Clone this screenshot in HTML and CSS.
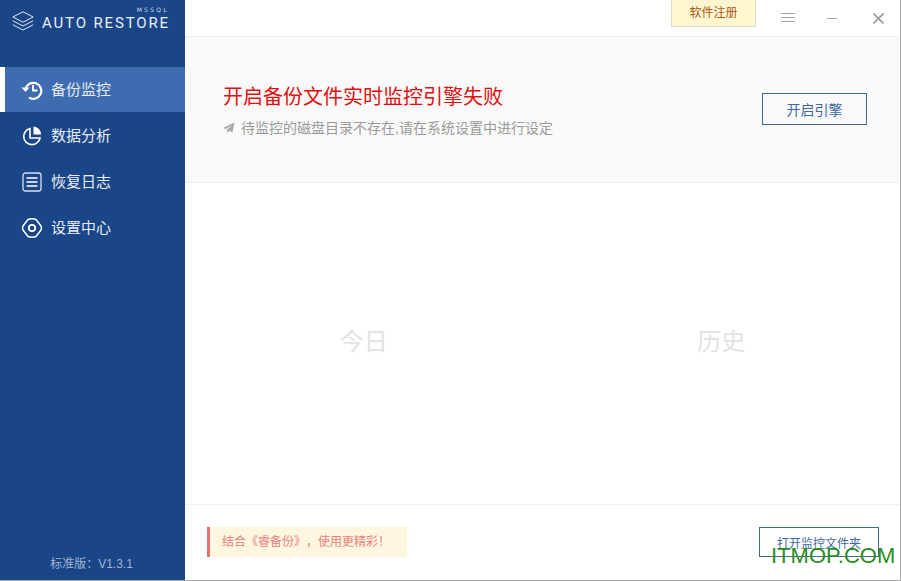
FILE: index.html
```html
<!DOCTYPE html>
<html lang="zh-CN">
<head>
    <meta charset="UTF-8">
    <title>Auto Restore</title>
    <link rel="stylesheet" href="styles.css">
</head>
<body>
    <div class="window">
        <aside class="sidebar">
            <div class="logo">
                <svg class="logo-icon" width="22" height="20" viewBox="0 0 22 20" fill="none" stroke="#dfe7f2" stroke-width="1">
                    <path d="M11 0.8 L21.2 6 L11 11.2 L0.8 6 Z"/>
                    <path d="M0.8 9.8 L11 15 L21.2 9.8"/>
                    <path d="M0.8 13.8 L11 19 L21.2 13.8"/>
                </svg>
                <div class="logo-text">
                    <div class="logo-sub">MSSQL</div>
                    <div class="logo-name">AUTO RESTORE</div>
                </div>
            </div>
            <nav class="nav">
                <div class="nav-item active">
                    <svg width="22" height="22" viewBox="0 0 22 22" fill="none" stroke="#fff" stroke-width="2.2">
                        <path d="M4.5 10 A8 8 0 1 1 8 18.6"/>
                        <path d="M0.5 8.5 L4.5 13 L8.5 8.5 Z" fill="#fff" stroke="none"/>
                        <path d="M12 6 V11.5 H16.5" stroke-width="1.8"/>
                    </svg>
                    <span>备份监控</span>
                </div>
                <div class="nav-item">
                    <svg width="22" height="22" viewBox="0 0 22 22" fill="none" stroke="#fff" stroke-width="1.6">
                        <path d="M9 3.5 A8.2 8.2 0 1 0 19 13 H9 Z"/>
                        <path d="M12.5 1.5 A8 8 0 0 1 20 9.5 H12.5 Z" fill="#fff" stroke="none"/>
                    </svg>
                    <span>数据分析</span>
                </div>
                <div class="nav-item">
                    <svg width="22" height="22" viewBox="0 0 22 22" fill="none" stroke="#fff" stroke-width="1.3">
                        <rect x="2" y="2" width="18" height="18" rx="2.5" stroke="#d5e0f0"/>
                        <path d="M5.5 7 H16.5 M5.5 11 H16.5 M5.5 15 H16.5" stroke-width="1.6"/>
                    </svg>
                    <span>恢复日志</span>
                </div>
                <div class="nav-item">
                    <svg width="22" height="22" viewBox="0 0 22 22" fill="none" stroke="#fff" stroke-width="1.5">
                        <path d="M7 2.5 Q11 1.2 15 2.5 L20 9 Q21 11 20 13 L15 19.5 Q11 20.8 7 19.5 L2 13 Q1 11 2 9 Z" stroke-linejoin="round"/>
                        <circle cx="11" cy="11" r="3.2" stroke-width="1.8"/>
                    </svg>
                    <span>设置中心</span>
                </div>
            </nav>
            <div class="version">标准版：V1.3.1</div>
        </aside>

        <main class="main">
            <header class="titlebar">
                <div class="register">软件注册</div>
                <div class="win-btns">
                    <svg width="14" height="10" viewBox="0 0 14 10" stroke="#a3a3a3" stroke-width="1"><path d="M0 0.5 H14 M0 4.5 H14 M0 8.5 H14"/></svg>
                    <svg class="win-min" width="10" height="11" viewBox="0 0 10 11" stroke="#a3a3a3" stroke-width="1"><path d="M0 5.5 H10"/></svg>
                    <svg class="win-close" width="11" height="11" viewBox="0 0 11 11" stroke="#9a9a9a" stroke-width="1.6"><path d="M0.5 0.5 L10.5 10.5 M10.5 0.5 L0.5 10.5"/></svg>
                </div>
            </header>

            <section class="status">
                <div class="status-text">
                    <h1>开启备份文件实时监控引擎失败</h1>
                    <p>
                        <svg width="12" height="12" viewBox="0 0 12 12"><path d="M11.5 0.5 L9.5 10.5 L6.2 8.8 L4.4 11 L4 7.8 L9.5 2.8 L2.8 7 L0.3 5.8 Z" fill="#a8a8a8"/></svg>
                        待监控的磁盘目录不存在,请在系统设置中进行设定
                    </p>
                </div>
                <button class="btn btn-engine">开启引擎</button>
            </section>

            <section class="stats">
                <div class="stat">今日</div>
                <div class="stat">历史</div>
            </section>

            <footer class="footer">
                <div class="tip">结合《睿备份》，使用更精彩！</div>
                <button class="btn btn-folder">打开监控文件夹</button>
            </footer>
        </main>
    </div>
    <div class="watermark">ITMOP.COM</div>
</body>
</html>
```

FILE: styles.css
```css
html, body {
    margin: 0;
    height: 100%;
}

body {
    position: relative;
    width: 901px;
    height: 581px;
    overflow: hidden;
    background-color: #a9a9a9;
    font-family: "Liberation Sans", "Noto Sans CJK SC", sans-serif;
    text-spacing-trim: space-all;
}

.window {
    display: flex;
    width: 900px;
    height: 580px;
    background-color: #fff;
}

.sidebar {
    display: flex;
    flex-direction: column;
    width: 185px;
    flex-shrink: 0;
    background-color: #1a4688;
    color: #fff;
}

.logo {
    display: flex;
    align-items: flex-start;
    gap: 8px;
    height: 67px;
    box-sizing: border-box;
    padding: 6px 0 0 12px;
}

.logo-icon {
    margin-top: 5px;
}

.logo-text {
    width: 127px;
}

.logo-sub {
    font-family: "DejaVu Sans", sans-serif;
    font-size: 6px;
    line-height: 7px;
    letter-spacing: 2.3px;
    text-align: right;
    color: #d3deee;
}

.logo-name {
    margin-top: 2px;
    font-family: Roboto, sans-serif;
    font-size: 15px;
    line-height: 16px;
    letter-spacing: 1.85px;
    white-space: nowrap;
    color: #e8eef7;
}

.nav {
    flex: 1;
}

.nav-item {
    display: flex;
    align-items: center;
    gap: 8px;
    height: 46px;
    padding-left: 21px;
    font-size: 15px;
    color: #e6ecf6;
}

.nav-item span {
    padding-bottom: 3px;
}

.nav-item.active {
    height: 45px;
    margin-bottom: 1px;
    padding-left: 16px;
    border-left: 5px solid #fff;
    background-color: #3f6cb0;
}

.version {
    padding: 0 2px 9px 0;
    text-align: center;
    font-size: 12px;
    color: #a3b5d2;
}

.main {
    display: flex;
    flex-direction: column;
    flex: 1;
    min-width: 0;
}

.titlebar {
    display: flex;
    justify-content: flex-end;
    align-items: flex-start;
    height: 36px;
    border-bottom: 1px solid #efefef;
}

.register {
    width: 83px;
    height: 26px;
    border: 1px solid #dcdcc4;
    border-top: 0;
    background-color: #fff6d0;
    color: #a5591a;
    font-size: 12px;
    line-height: 26px;
    text-align: center;
}

.win-btns {
    display: flex;
    align-items: center;
    height: 36px;
    margin-left: 25px;
    padding-right: 16px;
}

.win-min {
    margin-left: 32px;
}

.win-close {
    margin-left: 36px;
}

.status {
    display: flex;
    justify-content: space-between;
    align-items: center;
    height: 146px;
    box-sizing: border-box;
    padding: 0 33px 0 38px;
    background-color: #f9f9f9;
    border-bottom: 1px solid #f0f0f0;
}

.status h1 {
    margin: 0;
    font-size: 20px;
    line-height: 28px;
    font-weight: normal;
    color: #e01010;
}

.status p {
    display: flex;
    align-items: center;
    gap: 6px;
    margin: 8px 0 0;
    font-size: 14px;
    line-height: 18px;
    color: #999;
}

.btn {
    box-sizing: border-box;
    border: 1px solid #3f6a9f;
    background: transparent;
    color: #3f6a9f;
    font-family: inherit;
    padding: 0;
}

.btn-engine {
    width: 105px;
    height: 32px;
    margin-top: -1px;
    font-size: 14px;
}

.stats {
    display: flex;
    flex: 1;
    align-items: center;
    padding-bottom: 8px;
}

.stat {
    flex: 1;
    text-align: center;
    font-size: 24px;
    color: #e2e2e2;
}

.footer {
    display: flex;
    justify-content: space-between;
    align-items: flex-start;
    height: 76px;
    box-sizing: border-box;
    border-top: 1px solid #efefef;
    padding: 22px 21px 0 22px;
}

.tip {
    width: 200px;
    height: 30px;
    box-sizing: border-box;
    border-left: 3px solid #e96f6f;
    padding-left: 12px;
    background-color: #fff6e0;
    color: #ea7f7f;
    font-size: 12px;
    line-height: 30px;
    white-space: nowrap;
}

.btn-folder {
    width: 120px;
    height: 30px;
    font-size: 12px;
}

.watermark {
    position: absolute;
    left: 771px;
    top: 542px;
    font-size: 22px;
    line-height: 27px;
    color: #2a8c22;
    white-space: nowrap;
}
```
